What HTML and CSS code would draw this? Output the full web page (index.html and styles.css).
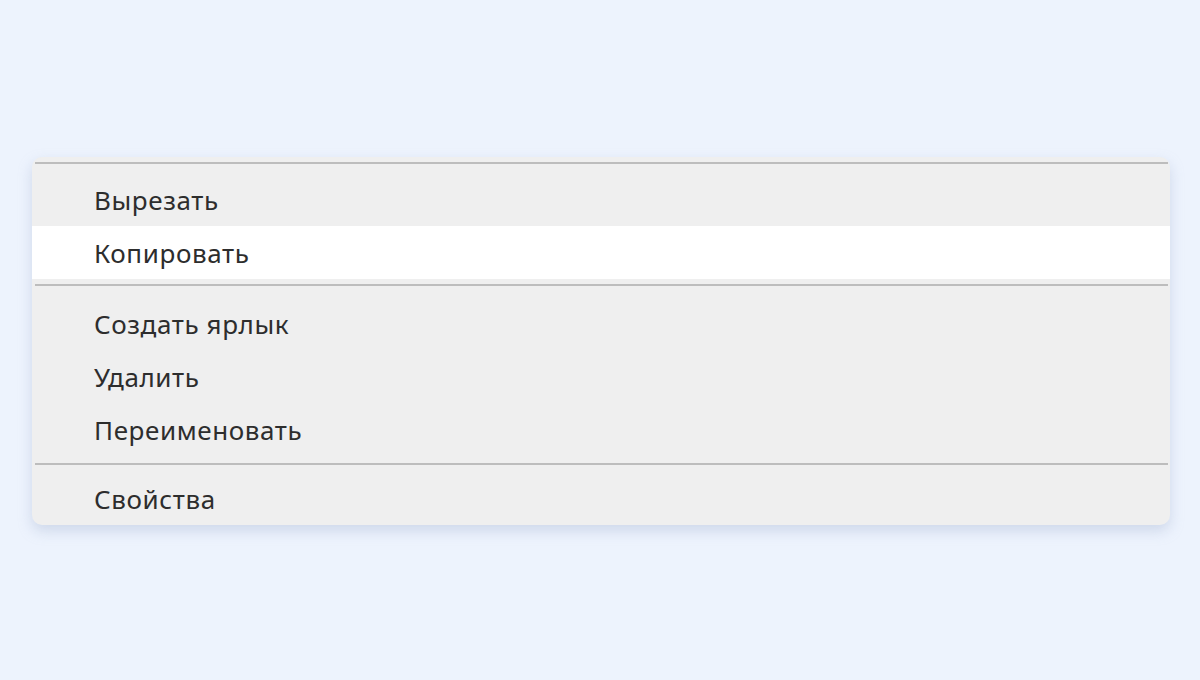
FILE: index.html
```html
<!DOCTYPE html>
<html lang="ru">
<head>
<meta charset="utf-8">
<title>Контекстное меню</title>
<link rel="stylesheet" href="styles.css">
</head>
<body>
<div class="menu">
  <div class="line top-line"></div>
  <div class="item first">Вырезать</div>
  <div class="item active">Копировать</div>
  <div class="sep sep1"><div class="line"></div></div>
  <div class="item">Создать ярлык</div>
  <div class="item">Удалить</div>
  <div class="item">Переименовать</div>
  <div class="sep sep2"><div class="line"></div></div>
  <div class="item last">Свойства</div>
</div>
</body>
</html>
```
FILE: styles.css
```css
html, body {
  margin: 0;
  padding: 0;
}
body {
  width: 1200px;
  height: 680px;
  background: #edf3fd;
  font-family: "Noto Sans", "Open Sans", sans-serif;
  padding-top: 157px;
  box-sizing: border-box;
}
.menu {
  margin-left: 32px;
  width: 1138px;
  height: 368px;
  box-sizing: border-box;
  background: #efefef;
  border-radius: 10px;
  box-shadow: 0 6px 14px rgba(150, 165, 200, 0.35);
  padding-top: 5px;
  overflow: hidden;
}
.line {
  height: 2px;
  background: #bdbdbd;
  margin: 0 2px 0 3px;
}
.top-line {
  margin-bottom: 9px;
}
.item {
  height: 53px;
  display: flex;
  align-items: center;
  padding-left: 62px;
  font-size: 26px;
  letter-spacing: 0.6px;
  color: #2d2d2d;
  box-sizing: border-box;
}
.item.active {
  background: #ffffff;
}
.sep1 {
  padding: 5px 0 11px;
}
.sep2 {
  padding: 7px 0 7px;
}
```
